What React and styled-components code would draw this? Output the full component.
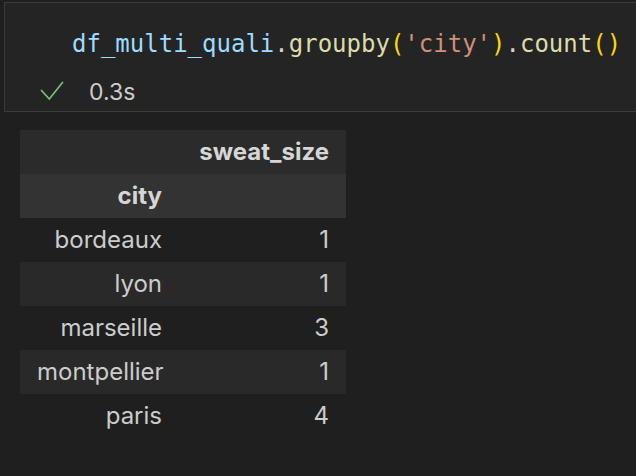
import * as React from "react"
import styled, { createGlobalStyle } from "styled-components"

// **** Global ****
const GlobalStyle = createGlobalStyle`
  html, body {
    margin: 0;
    padding: 0;
    background-color: #1f1f1f;
    overflow: hidden;
  }
`

// **** Styled Components ****
const Page = styled.div`
  display: flex;
  flex-direction: column;
  padding-top: 2px;
  width: 636px;
  height: 476px;
  box-sizing: border-box;
`

// the cell runs off the right edge, so no right border is shown
const CodeCell = styled.div`
  display: flex;
  flex-direction: column;
  margin-left: 4px;
  width: 632px;
  height: 110px;
  box-sizing: border-box;
  border: 1px solid #3b3b3b;
  border-right: none;
  background-color: #242424;
  padding: 26px 0 0 67px;
`

const CodeLine = styled.pre`
  margin: 0;
  font-family: "DejaVu Sans Mono", "Liberation Mono", monospace;
  font-size: 24px;
  line-height: 30px;
  color: #d4d4d4;
  white-space: pre;
`

const Tok = styled.span`
  color: ${p => p.$c};
`

const Status = styled.div`
  display: flex;
  align-items: center;
  margin-top: 19px;
  margin-left: -32px;
  gap: 25px;
  font-family: Inter, "Liberation Sans", sans-serif;
  font-size: 23px;
  line-height: 28px;
  color: #cccccc;

  svg {
    margin-top: -2px;
  }
`

const Output = styled.div`
  padding: 18px 0 0 20px;
`

const Table = styled.table`
  border-collapse: collapse;
  border-spacing: 0;
  table-layout: fixed;
  width: 326px;
  font-family: Inter, "Liberation Sans", sans-serif;
  font-size: 24px;
  line-height: 28px;
  color: #cccccc;

  th,
  td {
    height: 44px;
    padding: 0 17px;
    text-align: right;
    vertical-align: middle;
    box-sizing: border-box;
  }

  th {
    font-weight: 700;
    color: #d6d6d6;
  }
`

const HeadRow = styled.tr`
  background-color: ${p => (p.$index ? "#333333" : "#2b2b2b")};
`

const BodyRow = styled.tr`
  background-color: ${p => (p.$even ? "#1f1f1f" : "#292929")};
`

const Check = () => (
  <svg width="24" height="20" viewBox="0 0 24 20" fill="none">
    <path
      d="M1.5 9.5 L9.3 18 L22.5 1.5"
      stroke="#74c27a"
      strokeWidth="1.7"
      strokeLinecap="round"
      strokeLinejoin="round"
    />
  </svg>
)

const rows = [
  ["bordeaux", 1],
  ["lyon", 1],
  ["marseille", 3],
  ["montpellier", 1],
  ["paris", 4]
]

const App = () => {
  return (
    <Page>
      <GlobalStyle />
      <CodeCell>
        <CodeLine>
          <Tok $c="#9cdcfe">df_multi_quali</Tok>
          <Tok $c="#d4d4d4">.</Tok>
          <Tok $c="#dcdcaa">groupby</Tok>
          <Tok $c="#ffd700">(</Tok>
          <Tok $c="#ce9178">'city'</Tok>
          <Tok $c="#ffd700">)</Tok>
          <Tok $c="#d4d4d4">.</Tok>
          <Tok $c="#dcdcaa">count</Tok>
          <Tok $c="#ffd700">()</Tok>
        </CodeLine>
        <Status>
          <Check />
          <span>0.3s</span>
        </Status>
      </CodeCell>
      <Output>
        <Table>
          <colgroup>
            <col style={{ width: "159px" }} />
            <col style={{ width: "167px" }} />
          </colgroup>
          <thead>
            <HeadRow>
              <th></th>
              <th>sweat_size</th>
            </HeadRow>
            <HeadRow $index>
              <th>city</th>
              <th></th>
            </HeadRow>
          </thead>
          <tbody>
            {rows.map(([city, n], i) => (
              <BodyRow key={city} $even={i % 2 === 0}>
                <td>{city}</td>
                <td>{n}</td>
              </BodyRow>
            ))}
          </tbody>
        </Table>
      </Output>
    </Page>
  )
}

export default App
